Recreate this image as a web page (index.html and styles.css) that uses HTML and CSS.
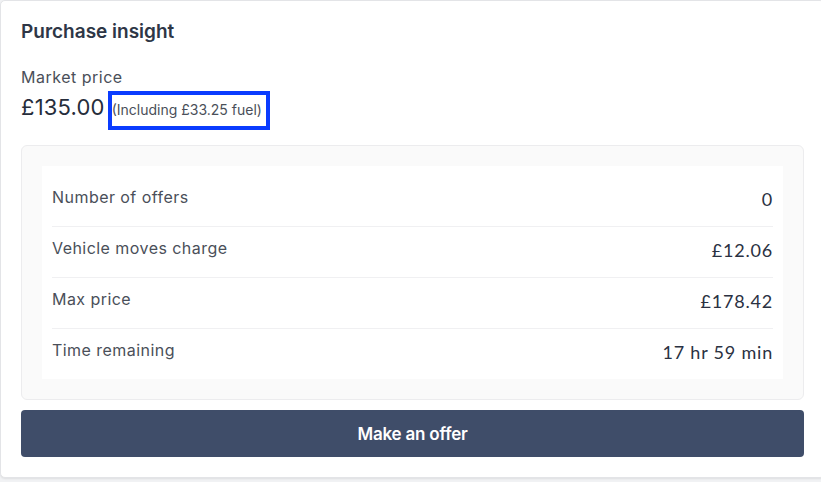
FILE: index.html
```html
<!DOCTYPE html>
<html lang="en">
<head>
<meta charset="utf-8">
<title>Purchase insight</title>
<link rel="stylesheet" href="styles.css">
</head>
<body>
<section class="card">
  <h2 class="title">Purchase insight</h2>
  <div class="market-label">Market price</div>
  <div class="price-row">
    <span class="price">£135.00</span>
    <span class="fuel">(Including £33.25 fuel)</span>
  </div>
  <div class="panel">
    <div class="list">
      <div class="row"><span class="label">Number of offers</span><span class="value">0</span></div>
      <div class="row"><span class="label">Vehicle moves charge</span><span class="value">£12.06</span></div>
      <div class="row"><span class="label">Max price</span><span class="value">£178.42</span></div>
      <div class="row"><span class="label">Time remaining</span><span class="value">17 hr 59 min</span></div>
    </div>
  </div>
  <button class="offer-btn" type="button">Make an offer</button>
</section>
</body>
</html>
```
FILE: styles.css
```css
html, body {
  margin: 0;
  padding: 0;
  overflow: hidden;
  background: #f1f2f4;
}
body {
  font-family: Inter, "Noto Sans", sans-serif;
  width: 821px;
  height: 482px;
}
.card {
  box-sizing: border-box;
  width: 825px;
  height: 478px;
  background: #ffffff;
  border: 1px solid #e3e4e7;
  border-radius: 5px;
  box-shadow: 0 1px 2px rgba(0, 0, 0, 0.08);
  padding: 19px 20px 20px 20px;
  display: flex;
  flex-direction: column;
}
.title {
  margin: 0;
  font-size: 19px;
  line-height: 24px;
  font-weight: 600;
  color: #2e3646;
}
.market-label {
  margin-top: 22px;
  font-size: 16px;
  line-height: 22px;
  color: #4a4f59;
  letter-spacing: 0.5px;
}
.price-row {
  display: flex;
  align-items: flex-start;
  gap: 3px;
  margin-top: 3px;
}
.price {
  margin-top: 1px;
  font-size: 22px;
  line-height: 30px;
  color: #262d3b;
  letter-spacing: 0.2px;
}
.fuel {
  border: 4px solid #0a3cff;
  padding: 6px 4px 7px 0;
  font-size: 14px;
  line-height: 18px;
  color: #4a4f59;
}
.panel {
  margin-top: 15px;
  background: #fafafa;
  border: 1px solid #ececee;
  border-radius: 6px;
  padding: 20px;
}
.list {
  background: #ffffff;
  padding: 10px 10px 0 10px;
  display: flex;
  flex-direction: column;
}
.row {
  display: flex;
  justify-content: space-between;
  align-items: center;
  height: 50px;
  border-bottom: 1px solid #f0f0f2;
}
.row:last-child {
  border-bottom: none;
}
.label {
  font-size: 16px;
  color: #4a4f59;
  letter-spacing: 0.45px;
  position: relative;
  top: -4px;
}
.value {
  font-family: Lato, "Noto Sans", sans-serif;
  font-size: 18px;
  color: #2a3142;
  letter-spacing: 0.8px;
  position: relative;
  top: -2px;
}
.offer-btn {
  margin-top: 10px;
  height: 47px;
  border: none;
  border-radius: 4px;
  background: #3f4d69;
  color: #ffffff;
  font-family: Inter, "Noto Sans", sans-serif;
  font-size: 17px;
  font-weight: 600;
  letter-spacing: -0.2px;
}
```
